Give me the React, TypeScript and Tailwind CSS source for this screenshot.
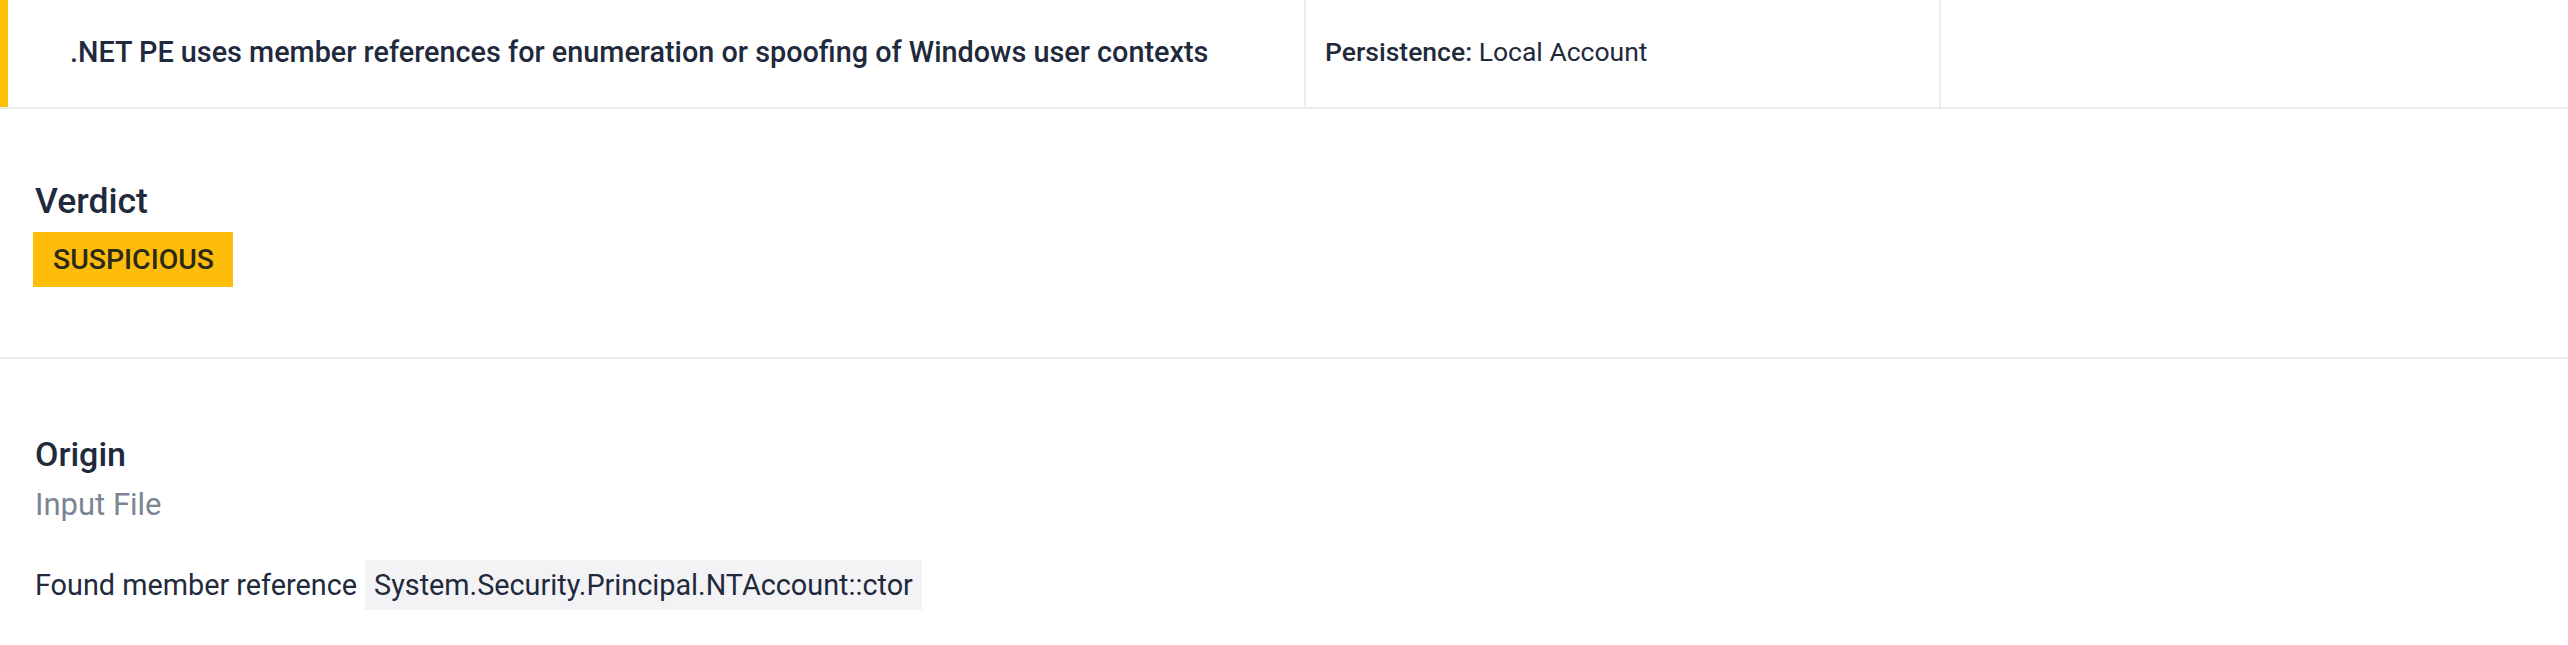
import React from "react";

export default function App() {
  return (
    <div className="w-[2568px] h-[645px] bg-white font-['Roboto',sans-serif] text-[#1f2a3c] overflow-hidden">
      {/* top row */}
      <div className="flex h-[109px] border-b-2 border-[#ececec]">
        <div className="w-[1304px] flex items-center border-l-[8px] border-[#ffc107] pl-[62px] pb-[4px]">
          <span className="text-[28.8px] font-medium leading-[34px]">
            .NET PE uses member references for enumeration or spoofing of Windows user contexts
          </span>
        </div>
        <div className="w-[635px] flex items-center border-l-2 border-[#ececec] pl-[19px] pb-[4px]">
          <span className="text-[26.5px] leading-[30px]">
            <span className="font-medium">Persistence:</span> Local Account
          </span>
        </div>
        <div className="flex-1 border-l-2 border-[#ececec]" />
      </div>

      {/* verdict */}
      <div className="pl-[33px] pt-[73px] pb-[70px] border-b-2 border-[#ececec]">
        <div className="text-[35.5px] font-medium leading-[38px] pl-[2px]">Verdict</div>
        <div className="mt-[12px] inline-flex h-[55px] w-[200px] items-center pl-[20px] bg-[#fdbd0a] text-[28.4px] font-medium leading-[55px] text-[#2a2a1a]">
          SUSPICIOUS
        </div>
      </div>

      {/* origin */}
      <div className="pl-[35px] pt-[76px]">
        <div className="text-[34px] font-medium leading-[38px]">Origin</div>
        <div className="mt-[15px] text-[31px] leading-[34px] text-[#7b8594]">Input File</div>
        <div className="mt-[38px] flex items-center text-[28.8px]">
          <span className="leading-[50px]">Found member reference</span>
          <span className="ml-[8px] bg-[#f3f3f5] px-[9px] leading-[50px]">
            System.Security.Principal.NTAccount::ctor
          </span>
        </div>
      </div>
    </div>
  );
}
